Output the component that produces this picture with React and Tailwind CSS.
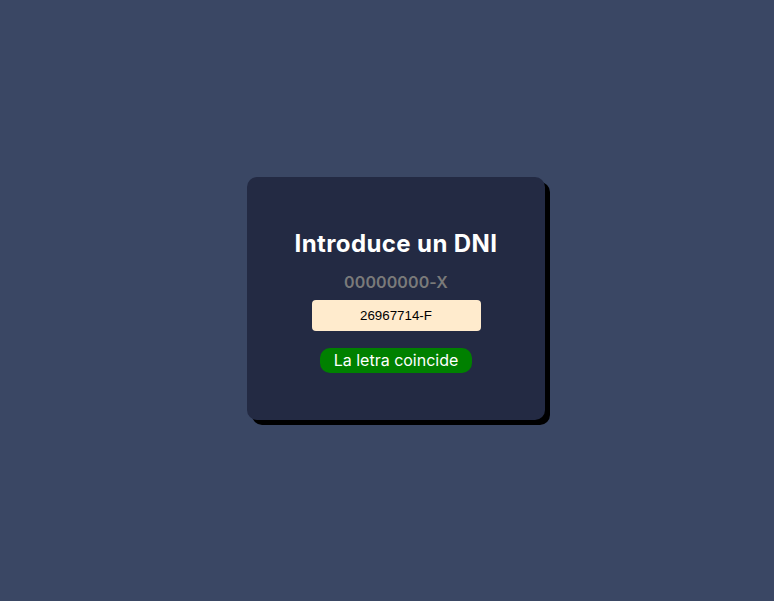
import React from "react";

export default function App() {
  return (
    <div className="w-[774px] h-[601px] bg-[#3a4764] flex items-center justify-center" style={{ fontFamily: "Inter, 'Noto Sans', sans-serif" }}>
      <div className="ml-[18px] mt-[-4px] w-[298px] h-[243px] bg-[#232a43] rounded-[10px] shadow-[5px_5px_0_0_#000] flex flex-col items-center pt-[50px]">
        <h1 className="h-[33px] leading-[33px] text-[24px] font-bold text-white tracking-[0.4px]">Introduce un DNI</h1>
        <div className="mt-[10px] h-[24px] leading-[24px] text-[16px] font-semibold text-[#7a7a7a] tracking-[0.1px]">00000000-X</div>
        <input
          readOnly
          value="26967714-F"
          className="mt-[6px] w-[169px] h-[31px] bg-[#ffebcd] rounded-[4px] text-center text-black text-[13.33px] outline-none"
          style={{ fontFamily: "'Liberation Sans', Arial, sans-serif" }}
        />
        <div className="mt-[17px] h-[25px] w-[152px] text-center rounded-[10px] bg-[#008000] text-white text-[16px] leading-[25px]">La letra coincide</div>
      </div>
    </div>
  );
}
